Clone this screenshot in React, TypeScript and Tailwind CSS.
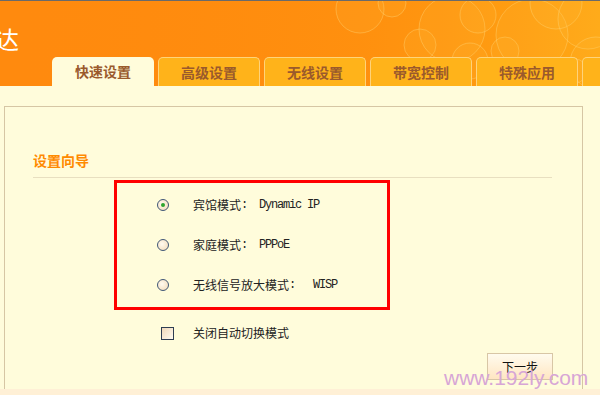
import React from "react";

const cjk = { fontFamily: '"Noto Sans CJK SC", "Noto Sans", sans-serif' };
const mono = { fontFamily: '"Liberation Mono", "DejaVu Sans Mono", monospace' };

function Bubbles() {
  const circles: [number, number, number][] = [
    [360, 8, 24], [392, 2, 14], [420, 44, 16], [452, 28, 33], [478, 14, 18],
    [470, 60, 18], [505, 50, 14], [532, 34, 36], [556, 2, 26], [588, 18, 30],
    [596, 62, 26], [575, 70, 12], [430, 72, 12], [545, 80, 16],
  ];
  return (
    <svg className="absolute left-0 top-0" width="600" height="86" viewBox="0 0 600 86">
      <defs>
        <linearGradient id="hg" x1="0" y1="0" x2="1" y2="0">
          <stop offset="0" stopColor="#ff8a0e" stopOpacity="0" />
          <stop offset="0.6" stopColor="#ff960f" stopOpacity="0.5" />
          <stop offset="1" stopColor="#ffa814" stopOpacity="1" />
        </linearGradient>
      </defs>
      <rect x="0" y="0" width="600" height="86" fill="url(#hg)" />
      {circles.map(([cx, cy, r], i) => (
        <circle key={i} cx={cx} cy={cy} r={r} fill="#ffc040" fillOpacity="0.14" stroke="#ffd878" strokeOpacity="0.4" strokeWidth="1" />
      ))}
    </svg>
  );
}

function Radio({ checked }: { checked?: boolean }) {
  return (
    <span className="flex h-[12px] w-[12px] shrink-0 items-center justify-center rounded-full border border-[#3f5676] bg-[radial-gradient(circle_at_40%_40%,#fffaf0,#f3d9b4)]">
      {checked && <span className="h-[4px] w-[4px] rounded-full bg-[#2fa52f]" />}
    </span>
  );
}

function Row({ cn, en, checked }: { cn: string; en: string; checked?: boolean }) {
  return (
    <div className="flex h-[40px] items-center pl-[40px]">
      <Radio checked={checked} />
      <span className="ml-[24px] text-[12px] leading-none text-[#222]" style={cjk}>{cn}</span>
      <span className="whitespace-pre text-[12px] leading-none tracking-[-1.2px] text-[#222]" style={mono}>{en}</span>
    </div>
  );
}

const tabs = ["快速设置", "高级设置", "无线设置", "带宽控制", "特殊应用", "系统工具"];

export default function App() {
  return (
    <div className="relative flex h-[395px] w-[600px] flex-col overflow-hidden bg-[#fffcdb]">
      <div className="h-[1px] bg-[#6a6a6a]" />
      <div className="relative h-[85px] overflow-hidden bg-[#ff8a0e]">
        <Bubbles />
        <span className="absolute left-[-5px] top-[26px] text-[24px] leading-none text-white" style={cjk}>达</span>
        <div className="absolute bottom-0 left-[52px] flex gap-[4px]">
          {tabs.map((t, i) => (
            <div
              key={t}
              className={
                i === 0
                  ? "flex h-[29px] w-[102px] shrink-0 items-center justify-center rounded-t-[5px] bg-[#fffcdb] text-[14px] font-bold text-[#9a5a2c]"
                  : "flex h-[29px] w-[102px] shrink-0 items-center justify-center rounded-t-[5px] border border-b-0 border-[#ffd37a] bg-[#ffb31a] text-[14px] font-bold text-[#9a5a2c]"
              }
              style={cjk}
            >
              {t}
            </div>
          ))}
        </div>
      </div>
      <div className="h-[303px] pl-[4px] pt-[20px]">
        <div className="h-[283px] w-[579px] border-l border-r border-t border-[#d6c6a4]">
          <div className="ml-[28px] mt-[43px] w-[519px] border-b border-[#e8dfc0] pb-[7px]">
            <div className="text-[14px] font-bold leading-[20px] text-[#ff8a00]" style={cjk}>设置向导</div>
          </div>
          <div className="ml-[109px] mt-[2px] w-[276px] border-[3px] border-[#ff0000] py-[2px]">
            <Row cn="宾馆模式" en=":  Dynamic IP" checked />
            <Row cn="家庭模式" en=":  PPPoE" />
            <Row cn="无线信号放大模式" en=":   WISP" />
          </div>
          <div className="ml-[156px] mt-[13px] flex h-[20px] items-center">
            <span className="h-[13px] w-[13px] border border-[#2e3d52] bg-gradient-to-br from-[#efd8ba] to-[#fffaf0]" />
            <span className="ml-[19px] text-[12px] leading-none text-[#222]" style={cjk}>关闭自动切换模式</span>
          </div>
          <div className="ml-[482px] mt-[10px] flex h-[27px] w-[66px] items-center justify-center border border-[#d8c6a6] bg-gradient-to-b from-[#fffbee] to-[#ffe6c2] text-[12px] text-[#111]" style={cjk}>
            下一步
          </div>
        </div>
      </div>
      <div className="h-[6px] bg-[#fff0d6]" />
      <span
        className="absolute left-[444px] top-[367px] text-[21px] leading-none text-[#d7a6d6]"
        style={{ fontFamily: '"Liberation Sans", Arial, sans-serif' }}
      >
        www.192ly.com
      </span>
    </div>
  );
}
